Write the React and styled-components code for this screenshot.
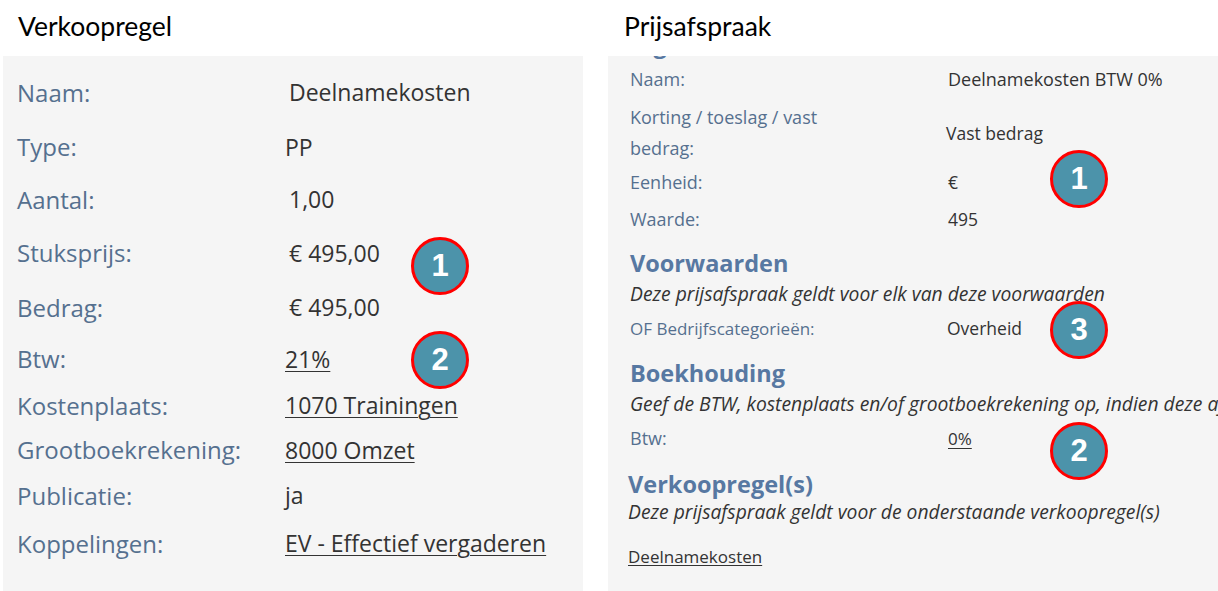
import React from "react";
import styled, { createGlobalStyle } from "styled-components";

const GlobalStyle = createGlobalStyle`
  html, body {
    margin: 0;
    padding: 0;
    background: #ffffff;
  }
  body {
    font-family: "Open Sans", "Liberation Sans", sans-serif;
  }
`;

const Page = styled.div`
  width: 1218px;
  height: 591px;
  display: flex;
  gap: 25px;
  padding-left: 3px;
  box-sizing: border-box;
  overflow: hidden;
`;

const Column = styled.section`
  width: ${(p) => p.$width}px;
  display: flex;
  flex-direction: column;
`;

const Title = styled.div`
  height: 56px;
  box-sizing: border-box;
  padding: 11px 0 0 ${(p) => p.$indent}px;
  font-family: Lato, "Open Sans", sans-serif;
  font-size: 26.5px;
  line-height: 30px;
  color: #000;
`;

const Panel = styled.div`
  position: relative;
  flex: 1;
  background: #f5f5f5;
  overflow: hidden;
  padding: ${(p) => p.$pad};
`;

/* Verkoopregel details */
const Row = styled.div`
  display: flex;
  align-items: center;
  height: ${(p) => p.$h}px;
`;

const Label = styled.div`
  width: 268px;
  font-size: 24px;
  color: #55708f;
`;

const Value = styled.div`
  font-size: 23px;
  color: #333;
  padding-left: ${(p) => p.$indent || 0}px;
`;

const Link = styled.span`
  color: #333;
  text-decoration: underline;
  text-underline-offset: 3px;
  text-decoration-thickness: 1px;
`;

/* Prijsafspraak details */
const Field = styled.div`
  display: flex;
  align-items: center;
  margin-top: ${(p) => p.$mt}px;
  height: ${(p) => p.$h || 30}px;
`;

const FieldLabel = styled.div`
  width: 210px;
  margin-right: 108px;
  font-size: ${(p) => p.$size || 18}px;
  color: #55708f;
  line-height: 31px;
`;

const FieldValue = styled.div`
  font-size: ${(p) => p.$size || 17.5}px;
  color: #333;
  margin-left: ${(p) => p.$shift || 0}px;
`;

const Clip = styled.div`
  height: 4px;
  overflow: hidden;
`;

const Heading = styled.h3`
  margin: ${(p) => p.$mt}px 0 0 ${(p) => p.$shift || 0}px;
  font-size: 23.5px;
  line-height: 30px;
  font-weight: 700;
  color: #5778a2;
`;

const Note = styled.p`
  margin: ${(p) => p.$mt}px 0 0 ${(p) => p.$shift || 0}px;
  font-size: 19.3px;
  line-height: 22px;
  font-style: italic;
  color: #333;
  white-space: nowrap;
`;

const PlainLink = styled.a`
  display: block;
  margin: ${(p) => p.$mt}px 0 0 ${(p) => p.$shift || 0}px;
  font-size: 17px;
  line-height: 22px;
  color: #333;
  text-decoration: underline;
  text-underline-offset: 2px;
`;

/* numbered callout markers */
const Badge = styled.div`
  position: absolute;
  left: ${(p) => p.$x}px;
  top: ${(p) => p.$y}px;
  width: 58px;
  height: 58px;
  box-sizing: border-box;
  border: 3px solid #ff0000;
  border-radius: 50%;
  background: #4c93aa;
  color: #fff;
  display: flex;
  align-items: center;
  justify-content: center;
  font-family: "Liberation Sans", Arial, sans-serif;
  font-weight: 700;
  font-size: 31px;
`;

const sale = [
  { label: "Naam:", value: "Deelnamekosten", h: 56, indent: 4 },
  { label: "Type:", value: "PP", h: 53 },
  { label: "Aantal:", value: "1,00", h: 52, indent: 4 },
  { label: "Stuksprijs:", value: "€ 495,00", h: 55, indent: 4 },
  { label: "Bedrag:", value: "€ 495,00", h: 54, indent: 4 },
  { label: "Btw:", value: "21%", h: 49, link: true },
  { label: "Kostenplaats:", value: "1070 Trainingen", h: 44, link: true },
  { label: "Grootboekrekening:", value: "8000 Omzet", h: 45, link: true },
  { label: "Publicatie:", value: "ja", h: 46 },
  { label: "Koppelingen:", value: "EV - Effectief vergaderen", h: 50, link: true },
];

const App = () => {
  return (
    <>
      <GlobalStyle />
      <Page>
        <Column $width={580}>
          <Title $indent={15}>Verkoopregel</Title>
          <Panel $pad="8px 0 0 14px">
            {sale.map((r) => (
              <Row key={r.label} $h={r.h}>
                <Label>{r.label}</Label>
                <Value $indent={r.indent}>
                  {r.link ? <Link>{r.value}</Link> : r.value}
                </Value>
              </Row>
            ))}
            <Badge $x={408} $y={181}>1</Badge>
            <Badge $x={408} $y={275}>2</Badge>
          </Panel>
        </Column>

        <Column $width={610}>
          <Title $indent={16}>Prijsafspraak</Title>
          <Panel $pad="0 0 0 22px">
            {/* previous section heading, scrolled mostly out of view */}
            <Clip aria-hidden="true">
              <Heading $mt={-27}>Algemeen</Heading>
            </Clip>
            <Field $mt={4}>
              <FieldLabel>Naam:</FieldLabel>
              <FieldValue $size={18}>Deelnamekosten BTW 0%</FieldValue>
            </Field>
            <Field $mt={8} $h={62}>
              <FieldLabel>Korting / toeslag / vast bedrag:</FieldLabel>
              <FieldValue $shift={-2}>Vast bedrag</FieldValue>
            </Field>
            <Field $mt={3}>
              <FieldLabel>Eenheid:</FieldLabel>
              <FieldValue>€</FieldValue>
            </Field>
            <Field $mt={7}>
              <FieldLabel>Waarde:</FieldLabel>
              <FieldValue>495</FieldValue>
            </Field>

            <Heading $mt={14}>Voorwaarden</Heading>
            <Note $mt={5}>Deze prijsafspraak geldt voor elk van deze voorwaarden</Note>
            <Field $mt={8}>
              <FieldLabel $size={17}>OF Bedrijfscategorieën:</FieldLabel>
              <FieldValue $shift={-1}>Overheid</FieldValue>
            </Field>

            <Heading $mt={15}>Boekhouding</Heading>
            <Note $mt={5}>
              Geef de BTW, kostenplaats en/of grootboekrekening op, indien deze afwijken
            </Note>
            <Field $mt={8}>
              <FieldLabel>Btw:</FieldLabel>
              <FieldValue $size={17}>
                <Link>0%</Link>
              </FieldValue>
            </Field>

            <Heading $mt={16} $shift={-2}>Verkoopregel(s)</Heading>
            <Note $mt={2} $shift={-2}>
              Deze prijsafspraak geldt voor de onderstaande verkoopregel(s)
            </Note>
            <PlainLink $mt={23} $shift={-2}>Deelnamekosten</PlainLink>

            <Badge $x={442} $y={94}>1</Badge>
            <Badge $x={442} $y={245}>3</Badge>
            <Badge $x={442} $y={366}>2</Badge>
          </Panel>
        </Column>
      </Page>
    </>
  );
};

export default App;
